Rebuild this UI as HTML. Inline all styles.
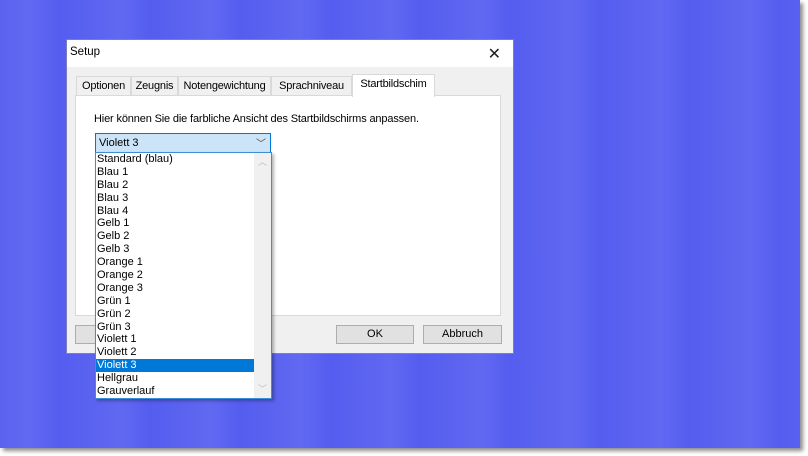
<!DOCTYPE html>
<html><head><style>
*{margin:0;padding:0;box-sizing:border-box}
body{width:808px;height:456px;background:#fff;position:relative;overflow:hidden;font-family:"Liberation Sans",sans-serif;font-size:11px;color:#000}
.bg{position:absolute;left:0;top:0;width:800px;height:448px;background:
repeating-linear-gradient(90deg,#5a62ef 0,#6169f2 30px,#555df0 60px,#5a62ef 90px);
box-shadow:3px 3px 4px rgba(0,0,0,.45)}
.dlg{position:absolute;left:66px;top:39px;width:448px;height:315px;background:#f0f0f0;border:1px solid #7b7fb8}
.title{height:27px;background:#fff;padding:6px 0 0 3px;font-size:11.5px}
.x{position:absolute;right:12px;top:4px;font-size:16px;font-weight:100;color:#222}
.tab{position:absolute;top:36px;height:20px;border:1px solid #d9d9d9;border-bottom:none;background:#f0f0f0;padding:3px 0 0;text-align:center;font-size:11px;letter-spacing:-0.2px;white-space:nowrap;overflow:hidden}
.tab.sel{top:34px;height:23px;background:#fff;z-index:2}
.panel{position:absolute;left:8px;top:55px;width:426px;height:221px;background:#fff;border:1px solid #d9d9d9}
.btn{position:absolute;top:285px;height:19px;border:1px solid #adadad;background:#e1e1e1;text-align:center;line-height:17px}
.combo{position:absolute;left:95px;top:133px;width:176px;height:20px;background:#cce4f7;border:1px solid #0078d7;padding:3px 0 0 3px}
.list{position:absolute;left:95px;top:152px;width:177px;height:247px;background:#fff;border:1px solid #3c8fd7;box-shadow:2px 2px 3px rgba(0,0,0,.3)}
.list div{height:12.9px;line-height:13px;padding-left:1px;width:158px}
.list .hl{background:#0078d7;color:#fff}
.sb{position:absolute;right:0;top:0;width:17px;height:245px;background:#f0f0f0;color:#bbb;font-size:9px;text-align:center}
</style></head><body>
<div class="bg"></div>
<div class="dlg">
<div class="title">Setup</div><div class="x">✕</div>
<div class="tab" style="left:9px;width:55px">Optionen</div>
<div class="tab" style="left:64px;width:47px">Zeugnis</div>
<div class="tab" style="left:111px;width:93px">Notengewichtung</div>
<div class="tab" style="left:204px;width:81px">Sprachniveau</div>
<div class="tab sel" style="left:285px;width:83px">Startbildschim</div>
<div class="panel"><div style="position:absolute;left:18px;top:17px;letter-spacing:-0.15px">Hier können Sie die farbliche Ansicht des Startbildschirms anpassen.</div></div>
<div class="btn" style="left:8px;width:60px"></div>
<div class="btn" style="left:269px;width:78px">OK</div>
<div class="btn" style="left:356px;width:79px">Abbruch</div>
</div>
<div class="combo">Violett 3<span style="position:absolute;right:4px;top:1px;font-size:10px;color:#444">﹀</span></div>
<div class="list">
<div>Standard (blau)</div><div>Blau 1</div><div>Blau 2</div><div>Blau 3</div><div>Blau 4</div><div>Gelb 1</div><div>Gelb 2</div><div>Gelb 3</div><div>Orange 1</div><div>Orange 2</div><div>Orange 3</div><div>Grün 1</div><div>Grün 2</div><div>Grün 3</div><div>Violett 1</div><div>Violett 2</div><div class="hl">Violett 3</div><div>Hellgrau</div><div>Grauverlauf</div>
<span class="sb"><span style="position:absolute;left:4px;top:2px">︿</span><span style="position:absolute;left:4px;bottom:3px">﹀</span></span>
</div>
</body></html>
